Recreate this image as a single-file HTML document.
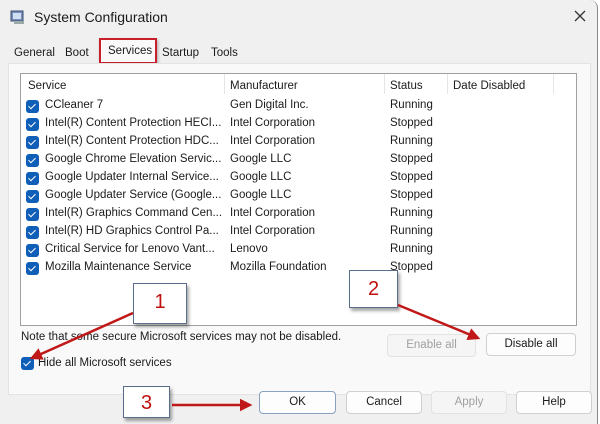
<!DOCTYPE html>
<html><head><style>
*{margin:0;padding:0;box-sizing:border-box}
body{width:600px;height:424px;background:#fff;font-family:"Liberation Sans",sans-serif;font-size:11.5px;color:#1b1b1b;position:relative;overflow:hidden}
.win{position:absolute;left:0;top:0;width:598px;height:424px;background:#f0f0f0;border-right:1px solid #888;border-top-right-radius:8px}
.abs{position:absolute;white-space:nowrap}
.panel{position:absolute;left:8px;top:63px;width:583px;height:332px;background:#f9f9f9;border:1px solid #e3e3e3}
.list{position:absolute;left:20px;top:73px;width:557px;height:253px;background:#fff;border:1px solid #a0a0a0}
.cb{position:absolute;width:13px;height:13px;background:#0f5fb8;border-radius:3px}
.cb:after{content:"";position:absolute;left:4px;top:2px;width:3px;height:6px;border:solid #fff;border-width:0 1.3px 1.3px 0;transform:rotate(45deg)}
.btn{position:absolute;height:23px;background:#fdfdfd;border:1px solid #d0d0d0;border-radius:4px;text-align:center;line-height:21px;font-size:11.5px}
.dis{color:#a0a0a0;background:#f5f5f5;border-color:#e2e2e2}
.call{position:absolute;background:#fff;border:1px solid #5a6e8c;box-shadow:2px 3px 3px rgba(0,0,0,.35);color:#c01010;font-size:20px;text-align:center}
.sep{position:absolute;top:74px;width:1px;height:20px;background:#e5e5e5}
</style></head><body>
<div class="win"></div>
<svg class="abs" style="left:10px;top:9px" width="16" height="16"><rect x="1" y="2" width="12" height="10" fill="#7a8fb8" stroke="#3a4a70"/><rect x="3" y="4" width="8" height="6" fill="#cfe0f5"/><rect x="4" y="12" width="10" height="3" fill="#9aa"/></svg>
<div class="abs" style="left:34px;top:9px;font-size:14px">System Configuration</div>
<svg class="abs" style="left:574px;top:10px" width="12" height="12"><path d="M1,1L11,11M11,1L1,11" stroke="#333" stroke-width="1.3"/></svg>
<div class="abs" style="left:14px;top:47px">General</div>
<div class="abs" style="left:65px;top:47px">Boot</div>
<div class="abs" style="left:99px;top:38px;width:58px;height:26px;border:2px solid #c8202a;background:#f9f9f9;box-shadow:1px 2px 3px rgba(0,0,0,.3)"></div>
<div class="abs" style="left:108px;top:45px">Services</div>
<div class="abs" style="left:162px;top:47px">Startup</div>
<div class="abs" style="left:211px;top:47px">Tools</div>
<div class="panel"></div>
<div class="list"></div>
<div class="sep" style="left:224px"></div><div class="sep" style="left:384px"></div><div class="sep" style="left:447px"></div><div class="sep" style="left:553px"></div>
<div class="abs" style="left:28px;top:80px">Service</div>
<div class="abs" style="left:230px;top:80px">Manufacturer</div>
<div class="abs" style="left:390px;top:80px">Status</div>
<div class="abs" style="left:453px;top:80px">Date Disabled</div>
<div id="rows"></div>
<script>
var r=[["CCleaner 7","Gen Digital Inc.","Running"],["Intel(R) Content Protection HECI...","Intel Corporation","Stopped"],["Intel(R) Content Protection HDC...","Intel Corporation","Running"],["Google Chrome Elevation Servic...","Google LLC","Stopped"],["Google Updater Internal Service...","Google LLC","Stopped"],["Google Updater Service (Google...","Google LLC","Stopped"],["Intel(R) Graphics Command Cen...","Intel Corporation","Running"],["Intel(R) HD Graphics Control Pa...","Intel Corporation","Running"],["Critical Service for Lenovo Vant...","Lenovo","Running"],["Mozilla Maintenance Service","Mozilla Foundation","Stopped"]];
var h="";r.forEach(function(a,i){var y=99+i*18;h+='<div class="cb" style="left:26px;top:'+(y+1)+'px"></div><div class="abs" style="left:45px;top:'+y+'px">'+a[0]+'</div><div class="abs" style="left:230px;top:'+y+'px">'+a[1]+'</div><div class="abs" style="left:390px;top:'+y+'px">'+a[2]+'</div>';});
document.getElementById("rows").innerHTML=h;
</script>
<div class="abs" style="left:21px;top:331px">Note that some secure Microsoft services may not be disabled.</div>
<div class="btn dis" style="left:387px;top:334px;width:89px">Enable all</div>
<div class="btn" style="left:486px;top:333px;width:90px">Disable all</div>
<div class="cb" style="left:21px;top:357px"></div>
<div class="abs" style="left:38px;top:357px">Hide all Microsoft services</div>
<div class="btn" style="left:259px;top:391px;width:77px;border-color:#8aa0c0">OK</div>
<div class="btn" style="left:346px;top:391px;width:76px">Cancel</div>
<div class="btn dis" style="left:431px;top:391px;width:76px">Apply</div>
<div class="btn" style="left:516px;top:391px;width:76px">Help</div>
<div class="call" style="left:133px;top:283px;width:54px;height:41px;line-height:36px">1</div>
<div class="call" style="left:349px;top:270px;width:49px;height:38px;line-height:36px">2</div>
<div class="call" style="left:123px;top:386px;width:47px;height:32px;line-height:32px">3</div>
<svg class="abs" style="left:0;top:0" width="600" height="424">
<defs><marker id="a" markerWidth="5" markerHeight="5" refX="4" refY="2.5" orient="auto"><path d="M0,0L5,2.5L0,5z" fill="#c01818"/></marker></defs>
<g stroke="#c01818" stroke-width="2.5" fill="none" marker-end="url(#a)">
<path d="M133,313L32,358"/><path d="M398,305L478,338"/><path d="M172,405L250,405"/></g></svg>
</body></html>
